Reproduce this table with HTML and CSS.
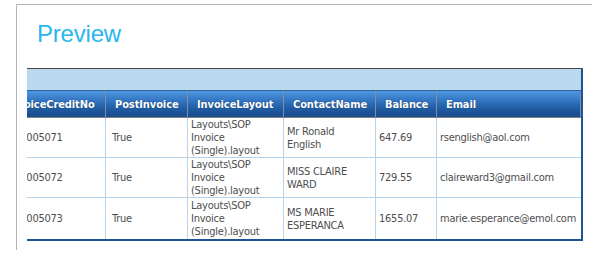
FILE: index.html
```html
<!DOCTYPE html>
<html>
<head>
<meta charset="utf-8">
<title>Preview</title>
<link rel="stylesheet" href="styles.css">
</head>
<body>
<div class="frame">
  <h1 class="title">Preview</h1>
  <div class="grid-wrap">
    <div class="group-band"></div>
    <table class="grid">
      <colgroup>
        <col class="c1"><col class="c2"><col class="c3"><col class="c4"><col class="c5"><col class="c6">
      </colgroup>
      <thead>
        <tr>
          <th>InvoiceCreditNo</th>
          <th>PostInvoice</th>
          <th>InvoiceLayout</th>
          <th>ContactName</th>
          <th>Balance</th>
          <th class="last">Email</th>
        </tr>
      </thead>
      <tbody>
        <tr>
          <td class="num">INV005071</td>
          <td class="bool">True</td>
          <td>Layouts\SOP Invoice (Single).layout</td>
          <td>Mr Ronald English</td>
          <td>647.69</td>
          <td class="last">rsenglish@aol.com</td>
        </tr>
        <tr>
          <td class="num">INV005072</td>
          <td class="bool">True</td>
          <td>Layouts\SOP Invoice (Single).layout</td>
          <td>MISS CLAIRE WARD</td>
          <td>729.55</td>
          <td class="last">claireward3@gmail.com</td>
        </tr>
        <tr class="final">
          <td class="num">INV005073</td>
          <td class="bool">True</td>
          <td>Layouts\SOP Invoice (Single).layout</td>
          <td>MS MARIE ESPERANCA</td>
          <td>1655.07</td>
          <td class="last">marie.esperance@emol.com</td>
        </tr>
      </tbody>
    </table>
  </div>
</div>
</body>
</html>
```

FILE: styles.css
```css
html, body {
  margin: 0;
  padding: 0;
  background: #ffffff;
}

.frame {
  margin: 4px 0 0 16px;
  width: 575px;
  height: 245px;
  border-top: 1px solid #b4b4b4;
  border-left: 1px solid #b4b4b4;
  overflow: hidden;
}

.title {
  margin: 15px 0 0 20px;
  font-family: "Liberation Sans", Arial, sans-serif;
  font-weight: normal;
  font-size: 24px;
  line-height: 28px;
  letter-spacing: -0.2px;
  color: #29b5ee;
}

.grid-wrap {
  margin: 20px 0 0 10px;
  width: 554px;
  border-top: 1px solid #4a4a4a;
  border-right: 2px solid #1c5596;
  border-bottom: 2px solid #1c5596;
  overflow: hidden;
}

.group-band {
  height: 21px;
  background: #bbd9ee;
}

.grid {
  margin-left: -29px;
  width: 583px;
  table-layout: fixed;
  border-collapse: separate;
  border-spacing: 0;
  font-family: "DejaVu Sans Condensed", "DejaVu Sans", sans-serif;
  font-size: 11px;
}

.c1 { width: 108px; }
.c2 { width: 82px; }
.c3 { width: 96px; }
.c4 { width: 92px; }
.c5 { width: 61px; }
.c6 { width: 144px; }

.grid th,
.grid td {
  box-sizing: border-box;
}

.grid th {
  height: 28px;
  padding: 0 0 0 9px;
  text-align: left;
  vertical-align: middle;
  font-weight: bold;
  color: #ffffff;
  white-space: nowrap;
  overflow: hidden;
  letter-spacing: -0.1px;
  border-top: 1px solid #2d64a4;
  border-right: 1px solid #7f8ea3;
  border-bottom: 1px solid #808080;
  background: linear-gradient(#4f97e0 0%, #3477c4 35%, #1f5aa0 70%, #1a4c8c 100%);
  text-shadow: 0 0 1px #0e2f5a;
}

.grid td {
  height: 40px;
  padding: 0 10px 0 3px;
  vertical-align: middle;
  line-height: 13px;
  letter-spacing: -0.25px;
  color: #4e4e4e;
  border-right: 1px solid #b6d3ea;
  border-bottom: 1px solid #b6d3ea;
}

.grid td.last {
  border-right: none;
  padding-right: 0;
}

.grid .final td {
  border-bottom: none;
  height: 41px;
}

.grid td.bool {
  padding-left: 6px;
}

.grid td.num {
  padding-left: 12px;
  white-space: nowrap;
}
```
